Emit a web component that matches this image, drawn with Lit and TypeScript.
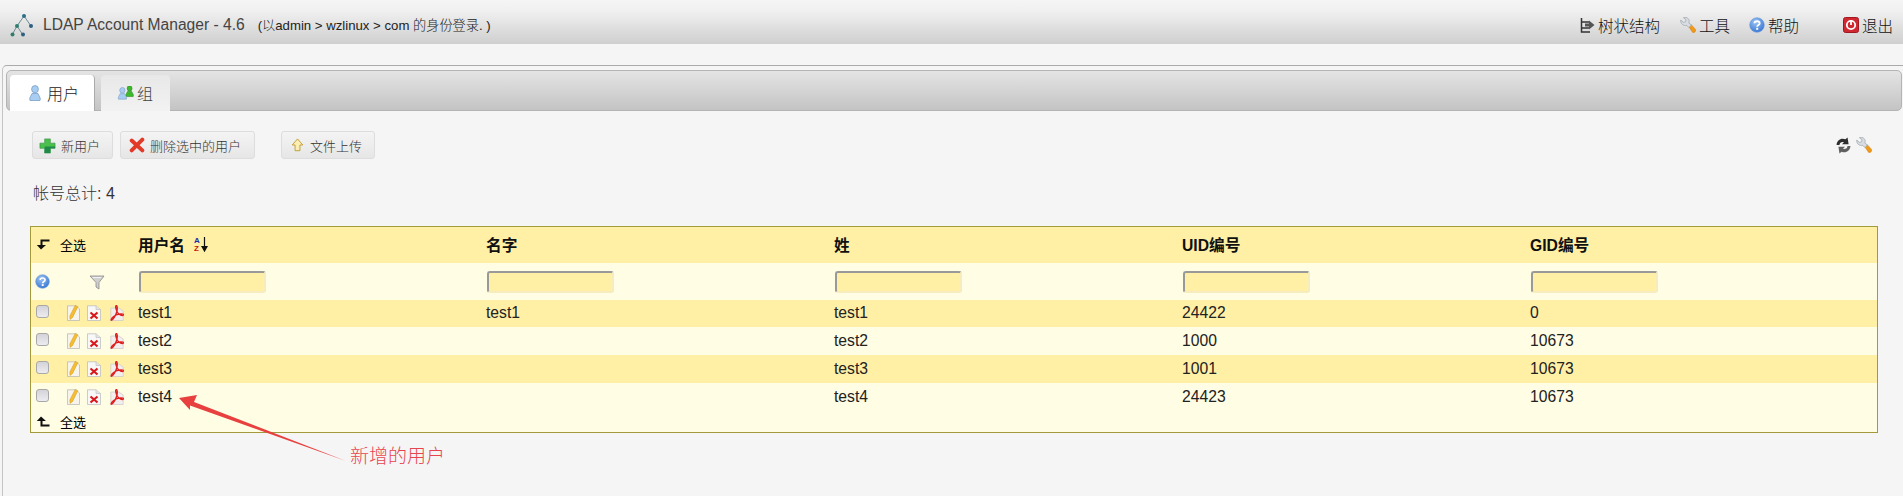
import { LitElement, html, css, svg } from 'lit';
import { customElement } from 'lit/decorators.js';

const wrench = html`<svg class="ico" viewBox="0 0 16 16" width="16" height="16">
  <path d="M9 10 L11 7.5 L15.6 12.4 C16.2 14.4 14.4 16 12.6 15.4Z" fill="#f09a1c" stroke="#d07c10" stroke-width=".5"/>
  <path d="M.8 3 L3.4 5.4 L5.6 4.8 L6 2.6 L3.4 .7 C6.4 -.3 9.4 1.4 9.2 4.6 L8.8 6 L11.4 8 L9 10.6 L6.8 8.4 C3.4 9.2 .2 6.6 .8 3Z" fill="#d8dde2" stroke="#9aa2aa" stroke-width=".7"/>
</svg>`;

const help = (size: number) => html`<svg class="ico" viewBox="0 0 16 16" width=${size} height=${size}>
  <defs><radialGradient id="hb" cx=".4" cy=".3" r=".8"><stop offset="0" stop-color="#9cc4f4"/><stop offset="1" stop-color="#2f6fd0"/></radialGradient></defs>
  <circle cx="8" cy="8" r="7.3" fill="url(#hb)" stroke="#6a9ad8" stroke-width=".6"/>
  <path d="M5.4 6.2 C5.6 3.6 10.6 3.6 10.7 6.3 C10.7 8 8.2 8 8.2 9.8" fill="none" stroke="#fff" stroke-width="1.8"/>
  <rect x="7.2" y="10.8" width="2" height="2" fill="#fff"/>
</svg>`;

const person = (fill: string, edge: string) => svg`
  <ellipse cx="8" cy="4.2" rx="3.4" ry="3.6" fill=${fill} stroke=${edge} stroke-width=".8"/>
  <path d="M3 15.5 C1.8 13 4.4 10.5 5 8.5 H11 C11.6 10.5 14.2 13 13 15.5Z" fill=${fill} stroke=${edge} stroke-width=".8"/>`;

const editIcon = html`<svg class="ico" viewBox="0 0 13 16" width="13" height="16">
  <path d="M.5 .8H9L12.5 4V15.5H.5Z" fill="#f6f4ec" stroke="#b4b4ae" stroke-width=".7"/>
  <path d="M8.2 .4 L10.8 1.8 L5.6 12.4 L3 14.4 L2.8 11Z" fill="#f4bd32" stroke="#d49a18" stroke-width=".5"/>
</svg>`;

const deleteIcon = html`<svg class="ico" viewBox="0 0 14 16" width="14" height="16">
  <path d="M.5 .8H9L13.5 4.5V15.5H.5Z" fill="#f8f8f8" stroke="#b8b8b8" stroke-width=".7"/>
  <path d="M9 .8V4.5H13.5" fill="#e4e4e4" stroke="#b8b8b8" stroke-width=".6"/>
  <path d="M3.5 7.5 L10.5 13.5 M10.5 7.5 L3.5 13.5" stroke="#d8181c" stroke-width="2.2"/>
</svg>`;

const pdfIcon = html`<svg class="ico" viewBox="0 0 14 16" width="14" height="16">
  <path d="M.8 3H9L13.2 6V15.5H.8Z" fill="#f2eeee" stroke="#cfc6c6" stroke-width=".7"/>
  <path d="M6.4 .6 C5 .6 5.8 4.6 7.4 7.4 C9 10 12.6 11.4 13.4 10 C13.8 8.6 9.4 8.6 6 10 C3.2 11.4 .6 14.4 1.2 15.2 C2.6 15.8 6 10.5 7 6 C7.4 3.5 7.4 .6 6.4 .6Z" fill="none" stroke="#e01c1c" stroke-width="1.35"/>
</svg>`;

const selectArrow = (up: boolean) => html`<svg class="ico" viewBox="0 0 14 12" width="14" height="12">
  ${up
    ? svg`<path d="M5 .5 L10 5 H6.5 V8.5 H13.5 V10.5 H4.5 V5 H.8Z" fill="#111"/>`
    : svg`<path d="M5 11.5 L10 7 H6.5 V3.5 H13.5 V1.5 H4.5 V7 H.8Z" fill="#111"/>`}
</svg>`;

const rows = [
  ['test1', 'test1', 'test1', '24422', '0'],
  ['test2', '', 'test2', '1000', '10673'],
  ['test3', '', 'test3', '1001', '10673'],
  ['test4', '', 'test4', '24423', '10673'],
];

@customElement('app-root')
export class AppRoot extends LitElement {
  static styles = css`
    :host {
      display: block;
      position: relative;
      height: 496px;
      overflow: hidden;
      background: #f5f5f5;
      color: #222;
      font-family: 'Liberation Sans', 'Noto Sans CJK SC', sans-serif;
      font-weight: 300;
    }
    .ico { display: block; flex: none; }
    .header {
      height: 44px;
      display: flex;
      align-items: center;
      padding: 5px 10px 0 10px;
      box-sizing: border-box;
      background: linear-gradient(#f5f5f5, #f0f0f0 25%, #cfcfcf);
    }
    .brand { font-size: 15.6px; margin-left: 9px; color: #444; }
    .login { font-size: 13.2px; margin-left: 13px; color: #222; }
    .nav { margin-left: auto; display: flex; font-size: 15.5px; align-items: center; color: #111; }
    .nav span { display: flex; align-items: center; gap: 3px; }
    .nav .tree { margin-right: 20px; }
    .nav .tools { margin-right: 19px; }
    .nav .helpnav { margin-right: 44px; }
    .panel {
      margin: 21px 0 0 2px;
      padding: 4px 1px 0 3px;
      height: 431px;
      box-sizing: border-box;
      border-top: 1px solid #aaa;
      border-left: 1px solid #c4c4c4;
      border-top-left-radius: 5px;
    }
    .tabbar {
      height: 41px;
      box-sizing: border-box;
      display: flex;
      align-items: flex-end;
      gap: 6px;
      padding-left: 3px;
      border: 1px solid #b4b4b4;
      border-radius: 5px;
      background: linear-gradient(#e4e4e4, #c4c4c4);
    }
    .tab {
      height: 36px;
      margin-bottom: -1px;
      display: flex;
      align-items: center;
      box-sizing: border-box;
      font-size: 16px;
      border-radius: 4px 4px 0 0;
      background: linear-gradient(#e8e8e8, #f2f2f2);
      padding: 0 17px 0 16px;
      gap: 3px;
      color: #444;
    }
    .tab.active {
      background: #fff;
      border-right: 1px solid #aaa;
      padding: 0 15px 0 19px;
      gap: 6px;
      color: #222;
    }
    .tools-row {
      display: flex;
      align-items: center;
      margin: 20px 0 0 26px;
      height: 28px;
    }
    .btn {
      height: 28px;
      box-sizing: border-box;
      display: flex;
      align-items: center;
      font-size: 13px;
      color: #333;
      border: 1px solid #ddd;
      border-radius: 3px;
      background: linear-gradient(#f4f4f4, #e6e6e6);
      padding: 0 12px 0 6px;
      gap: 5px;
    }
    .btn.del { margin-left: 7px; padding: 0 13px 0 8px; }
    .btn.upload { margin-left: 26px; padding: 0 12px 0 9px; gap: 6px; }
    .tools-right { margin-left: auto; margin-right: 30px; display: flex; gap: 4px; align-items: center; }
    .total { margin: 24px 0 0 27px; font-size: 16px; line-height: 22px; color: #333; }
    .table {
      margin: 21px 0 0 24px;
      width: 1848px;
      box-sizing: border-box;
      border: 1px solid #a39a3c;
      background: #fffde4;
      font-size: 15.7px;
    }
    .row {
      display: grid;
      grid-template-columns: 107px repeat(4, 348px) 1fr;
      align-items: center;
      box-sizing: border-box;
    }
    .row.head { height: 36px; padding-bottom: 2px; background: #fff0a6; font-weight: bold; color: #111; }
    .row.filter { height: 37px; background: #fffde4; }
    .row.data { height: 28px; }
    .row.data:nth-of-type(odd) { background: #fff0a6; }
    .row.first { height: 27px; padding-bottom: 2px; }
    .sel { display: flex; align-items: center; gap: 10px; padding-left: 5px; font-size: 13px; font-weight: 400; color: #000; }
    .headname { display: flex; align-items: center; gap: 9px; }
    .filter-icons { display: flex; align-items: center; gap: 39px; padding-left: 4px; }
    .filter input {
      display: block;
      width: 127px;
      height: 22px;
      margin-left: 1px;
      box-sizing: border-box;
      border: 2px solid #f6ecc0;
      border-top-color: #999;
      border-left-color: #999;
      border-radius: 3px;
      background: #fff0a6;
      padding: 0;
    }
    input[type='checkbox'] {
      appearance: none;
      display: block;
      margin: 0 0 3px;
      width: 13px;
      height: 13px;
      border: 1px solid #a8a8a8;
      border-radius: 3px;
      background: linear-gradient(#d4d4d8, #ececf0);
    }
    .actions { display: flex; align-items: center; padding-left: 5px; }
    .actions .a1 { margin-left: 18px; }
    .actions .a2 { margin-left: 7px; }
    .actions .a3 { margin-left: 9px; }
    .foot { height: 21px; display: flex; align-items: center; }
    .note {
      position: absolute;
      left: 350px;
      top: 443px;
      font-size: 19px;
      line-height: 28px;
      color: #e84450;
    }
    .arrow { position: absolute; left: 0; top: 0; pointer-events: none; }
  `;

  render() {
    return html`
      <div class="header">
        <svg class="ico" viewBox="0 0 24 24" width="24" height="24">
          <path d="M14 3 L7 13 L2 22 M7 13 L13 22 M14 3 L21 13" fill="none" stroke="#6d8a96" stroke-width="1"/>
          <circle cx="14" cy="3" r="2" fill="#2c6f86"/>
          <circle cx="7" cy="13" r="2" fill="#2f7d6e"/>
          <circle cx="21" cy="13" r="2" fill="#2c5f80"/>
          <circle cx="2.5" cy="21.5" r="2" fill="#2f7d6e"/>
          <circle cx="13" cy="21.5" r="2" fill="#2c5f80"/>
        </svg>
        <span class="brand">LDAP Account Manager - 4.6</span>
        <span class="login">(以admin &gt; wzlinux &gt; com 的身份登录. )</span>
        <div class="nav">
          <span class="tree">
            <svg class="ico" viewBox="0 0 15 16" width="15" height="16">
              <path d="M1.5 1 V15 H10 M1.5 5 H9 M1.5 11 H9" fill="none" stroke="#333" stroke-width="1.5"/>
              <path d="M9 3.5 L14.5 8 L9 12.5 V9.5 H5 V6.5 H9Z" fill="#555"/>
            </svg>树状结构
          </span>
          <span class="tools">${wrench}工具</span>
          <span class="helpnav">${help(16)}帮助</span>
          <span>
            <svg class="ico" viewBox="0 0 16 16" width="16" height="16">
              <rect x=".5" y=".5" width="15" height="15" rx="2" fill="#d02830" stroke="#a01820"/>
              <circle cx="8" cy="8" r="4.2" fill="none" stroke="#fff" stroke-width="1.8"/>
              <path d="M8 3 V8" stroke="#fff" stroke-width="1.8"/>
            </svg>退出
          </span>
        </div>
      </div>

      <div class="panel">
        <div class="tabbar">
          <div class="tab active">
            <svg class="ico" viewBox="2 0 12 16" width="12" height="16">${person('#a8cdf0', '#7aa0c8')}</svg>用户
          </div>
          <div class="tab">
            <svg class="ico" viewBox="0 0 20 16" width="17" height="14">
              <g transform="translate(8,-1) scale(.85)">${person('#3cb82c', '#2c8a20')}</g>
              <g transform="translate(-1,1) scale(.92)">${person('#a8cdf0', '#7aa0c8')}</g>
            </svg>组
          </div>
        </div>

        <div class="tools-row">
          <div class="btn">
            <svg class="ico" viewBox="0 0 18 18" width="17" height="17">
              <path d="M6 2 H12 V6.5 H17 V12 H12 V17 H6 V12 H1 V6.5 H6Z" fill="#4cc04c" stroke="#2a8a3a" stroke-width=".6"/>
              <path d="M1 10 H6 V17 H12 V12 H17 V10 H1Z" fill="#1f8a4a"/>
            </svg>
            新用户
          </div>
          <div class="btn del">
            <svg class="ico" viewBox="0 0 18 18" width="16" height="16">
              <path d="M3 4 L15 15 M15 3 L3 15" stroke="#e23a28" stroke-width="4.4" stroke-linecap="round"/>
            </svg>
            删除选中的用户
          </div>
          <div class="btn upload">
            <svg class="ico" viewBox="0 0 16 18" width="13" height="16">
              <path d="M8 1.5 L14.5 9 H11 V16 H5 V9 H1.5Z" fill="#fbeeb0" stroke="#b89020" stroke-width="1"/>
            </svg>
            文件上传
          </div>
          <div class="tools-right">
            <svg class="ico" viewBox="0 0 16 16" width="17" height="17">
              <path d="M1.5 7.5 C1.5 3 6 .4 9.8 2.2 L11.8 .4 L12.8 6.8 L6.6 6.8 L8.4 5 C6.4 4 4.4 5.4 4.2 7.5Z" fill="#2e2e2e"/>
              <path d="M14.5 8.5 C14.5 13 10 15.6 6.2 13.8 L4.2 15.6 L3.2 9.2 L9.4 9.2 L7.6 11 C9.6 12 11.6 10.6 11.8 8.5Z" fill="#606060"/>
            </svg>
            ${wrench}
          </div>
        </div>

        <div class="total">帐号总计: 4</div>

        <div class="table">
          <div class="row head">
            <div class="sel">${selectArrow(false)}全选</div>
            <div class="headname">
              用户名
              <svg class="ico" viewBox="0 0 14 16" width="14" height="16">
                <text x="0" y="7" font-size="8" font-family="Liberation Sans" fill="#1c2ca8">A</text>
                <text x="0" y="15" font-size="8" font-family="Liberation Sans" fill="#c81808">Z</text>
                <path d="M10.5 1 V13 M8 10.5 L10.5 15 L13 10.5Z" fill="#111" stroke="#111" stroke-width="1.2"/>
              </svg>
            </div>
            <div>名字</div>
            <div>姓</div>
            <div>UID编号</div>
            <div>GID编号</div>
          </div>
          <div class="row filter">
            <div class="filter-icons">
              ${help(15)}
              <svg class="ico" viewBox="0 0 16 16" width="16" height="16">
                <path d="M1 2 L15 2 L10 8.5 V15 L7 13 V8.5Z" fill="#cfcfcf" stroke="#888" stroke-width=".8"/>
                <path d="M3.5 3.6 H12.5" stroke="#f4f4f4" stroke-width="1"/>
              </svg>
            </div>
            ${[0, 1, 2, 3, 4].map(() => html`<div><input type="text" /></div>`)}
          </div>
          ${rows.map(
            (r, i) => html`
              <div class="row data ${i === 0 ? 'first' : ''}">
                <div class="actions">
                  <input type="checkbox" />
                  <span class="a1">${editIcon}</span>
                  <span class="a2">${deleteIcon}</span>
                  <span class="a3">${pdfIcon}</span>
                </div>
                ${r.map((c) => html`<div>${c}</div>`)}
              </div>
            `
          )}
          <div class="foot">
            <div class="sel">${selectArrow(true)}全选</div>
          </div>
        </div>
      </div>

      <svg class="arrow" width="1903" height="496">
        <path d="M179 398 L197 395 L194 402 L346 461 L190 405.5 L190 410Z" fill="#e8403f"/>
      </svg>
      <div class="note">新增的用户</div>
    `;
  }
}
